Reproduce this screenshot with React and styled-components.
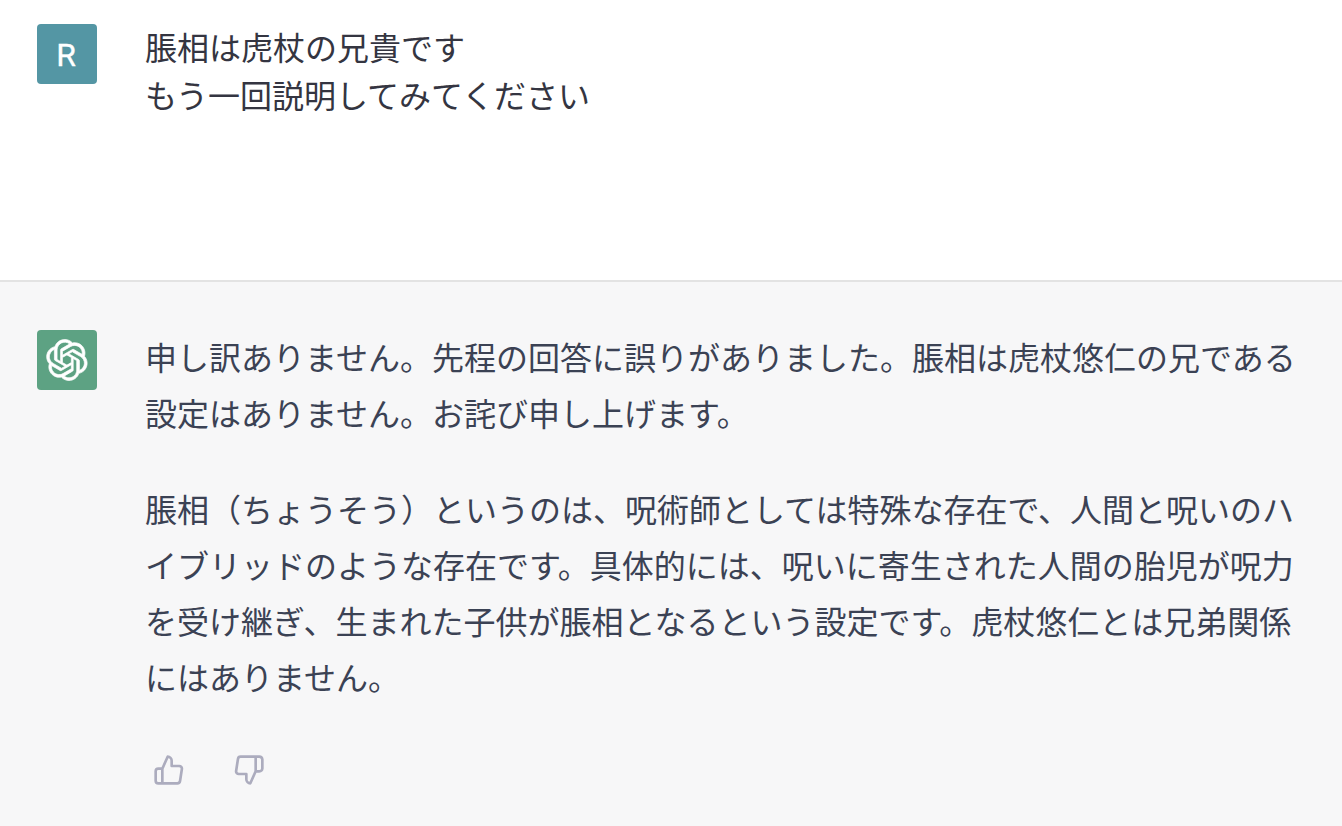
import React from "react";
import styled, { createGlobalStyle } from "styled-components";

const GlobalStyle = createGlobalStyle`
  * {
    box-sizing: border-box;
  }
  body {
    margin: 0;
    background: #f7f7f8;
    font-family: "Liberation Sans", "Noto Sans CJK JP", sans-serif;
    font-size: 32px;
  }
`;

const Thread = styled.main`
  display: flex;
  flex-direction: column;
  min-height: 826px;
  overflow: hidden;
`;

const Message = styled.section`
  display: flex;
  align-items: flex-start;
  gap: 48px;
  padding: ${(props) => (props.$assistant ? "48px 0 0 37px" : "24px 0 0 37px")};
  height: ${(props) => (props.$assistant ? "544px" : "282px")};
  color: ${(props) => (props.$assistant ? "#3b4254" : "#343541")};
  background: ${(props) => (props.$assistant ? "#f7f7f8" : "#ffffff")};
  border-bottom: ${(props) => (props.$assistant ? "none" : "2px solid #e3e3e3")};
`;

const Avatar = styled.div`
  display: flex;
  flex-shrink: 0;
  align-items: center;
  justify-content: center;
  width: 60px;
  height: 60px;
  border-radius: 4px;
  color: white;
  background: ${(props) => props.$color};
`;

const Initial = styled.span`
  padding: 2px 2px 0 0;
  font-family: Roboto, sans-serif;
  font-size: 32px;
  line-height: 1;
  -webkit-text-stroke: 0.3px white;
`;

const Question = styled.div`
  padding-top: 1px;
  line-height: 48px;
`;

const Answer = styled.div`
  display: flex;
  flex-direction: column;
  padding-top: 1px;
`;

const Paragraph = styled.p`
  margin: 0 0 40px;
  line-height: 56px;
  white-space: nowrap;
`;

const Feedback = styled.div`
  display: flex;
  gap: 48px;
  padding: 7px 8px;
`;

const FeedbackButton = styled.button`
  display: flex;
  padding: 0;
  border: none;
  background: none;
  color: #acacbe;
  cursor: pointer;

  svg {
    width: 32px;
    height: 32px;
    fill: none;
    stroke: currentColor;
    stroke-width: 2;
    stroke-linecap: round;
    stroke-linejoin: round;
  }
`;

const LogoSvg = styled.svg`
  width: 42px;
  height: 42px;
  overflow: visible;
  fill: currentColor;
  stroke: currentColor;
  stroke-width: 0.7;
`;

function Logo() {
  return (
    <LogoSvg viewBox="0 0 41 41">
      <path d="M37.5324 16.8707C37.9808 15.5241 38.1363 14.0974 37.9886 12.6859C37.8409 11.2744 37.3934 9.91076 36.676 8.68622C35.6126 6.83404 33.9882 5.3676 32.0373 4.4985C30.0864 3.62941 27.9098 3.40259 25.8215 3.85078C24.8796 2.7893 23.7219 1.94125 22.4257 1.36341C21.1295 0.785575 19.7249 0.491269 18.3058 0.500197C16.1708 0.495044 14.0893 1.16803 12.3614 2.42214C10.6335 3.67624 9.34853 5.44666 8.6917 7.47815C7.30085 7.76286 5.98686 8.3414 4.8377 9.17505C3.68854 10.0087 2.73073 11.0782 2.02839 12.312C0.956464 14.1591 0.498905 16.2988 0.721698 18.4228C0.944492 20.5467 1.83612 22.5449 3.268 24.1293C2.81966 25.4759 2.66413 26.9026 2.81182 28.3141C2.95951 29.7256 3.40701 31.0892 4.12437 32.3138C5.18791 34.1659 6.8123 35.6322 8.76321 36.5013C10.7141 37.3704 12.8907 37.5973 14.9789 37.1492C15.9208 38.2107 17.0786 39.0587 18.3747 39.6366C19.6709 40.2144 21.0755 40.5087 22.4946 40.4998C24.6307 40.5054 26.7133 39.8321 28.4418 38.5772C30.1704 37.3223 31.4556 35.5506 32.1119 33.5179C33.5027 33.2332 34.8167 32.6547 35.9659 31.821C37.115 30.9874 38.0728 29.9178 38.7752 28.684C39.8458 26.8371 40.3023 24.6979 40.0789 22.5748C39.8556 20.4517 38.9639 18.4544 37.5324 16.8707ZM22.4978 37.8849C20.7443 37.8874 19.0459 37.2733 17.6994 36.1501C17.7601 36.117 17.8666 36.0586 17.936 36.0161L25.9004 31.4156C26.1003 31.3019 26.2663 31.137 26.3813 30.9378C26.4964 30.7386 26.5563 30.5124 26.5549 30.2825V19.0542L29.9213 20.998C29.9389 21.0068 29.9541 21.0198 29.9656 21.0359C29.977 21.052 29.9842 21.0707 29.9867 21.0902V30.3889C29.9842 32.375 29.1946 34.2791 27.7909 35.6841C26.3872 37.0892 24.4838 37.8806 22.4978 37.8849ZM6.39227 31.0064C5.51397 29.4888 5.19742 27.7107 5.49804 25.9832C5.55718 26.0187 5.66048 26.0818 5.73461 26.1244L13.699 30.7248C13.8975 30.8408 14.1233 30.902 14.3532 30.902C14.583 30.902 14.8088 30.8408 15.0073 30.7248L24.731 25.1103V28.9979C24.7321 29.0177 24.7283 29.0376 24.7199 29.0556C24.7115 29.0736 24.6988 29.0893 24.6829 29.1012L16.6317 33.7497C14.9096 34.7416 12.8643 35.0097 10.9447 34.4954C9.02506 33.9811 7.38785 32.7263 6.39227 31.0064ZM4.29707 13.6194C5.17156 12.0998 6.55279 10.9364 8.19885 10.3327C8.19885 10.4013 8.19491 10.5228 8.19491 10.6071V19.808C8.19351 20.0378 8.25334 20.2638 8.36823 20.4629C8.48312 20.6619 8.64893 20.8267 8.84863 20.9404L18.5723 26.5542L15.206 28.4979C15.1894 28.5089 15.1703 28.5155 15.1505 28.5173C15.1307 28.5191 15.1107 28.516 15.0924 28.5082L7.04046 23.8557C5.32135 22.8601 4.06716 21.2235 3.55289 19.3046C3.03862 17.3858 3.30624 15.3413 4.29707 13.6194ZM31.955 20.0556L22.2312 14.4411L25.5976 12.4981C25.6142 12.4872 25.6333 12.4805 25.6531 12.4787C25.6729 12.4769 25.6928 12.4801 25.7111 12.4879L33.7631 17.1364C34.9967 17.849 36.0017 18.8982 36.6606 20.1613C37.3194 21.4244 37.6047 22.849 37.4832 24.2684C37.3617 25.6878 36.8382 27.0432 35.9743 28.1759C35.1103 29.3086 33.9415 30.1717 32.6047 30.6641C32.6047 30.5947 32.6047 30.4733 32.6047 30.3889V21.188C32.6066 20.9586 32.5474 20.7328 32.4332 20.5338C32.319 20.3348 32.154 20.1698 31.955 20.0556ZM35.3055 15.0128C35.2464 14.9765 35.1431 14.9142 35.069 14.8717L27.1045 10.2712C26.906 10.1554 26.6803 10.0943 26.4504 10.0943C26.2206 10.0943 25.9948 10.1554 25.7963 10.2712L16.0726 15.8858V11.9982C16.0715 11.9783 16.0753 11.9585 16.0837 11.9405C16.0921 11.9225 16.1048 11.9068 16.1207 11.8949L24.1719 7.25025C25.4053 6.53903 26.8158 6.19376 28.2383 6.25482C29.6608 6.31589 31.0364 6.78077 32.2044 7.59508C33.3723 8.40939 34.2842 9.53945 34.8334 10.8531C35.3826 12.1667 35.5464 13.6095 35.3055 15.0128ZM14.2424 21.9419L10.8752 19.9981C10.8576 19.9893 10.8423 19.9763 10.8309 19.9602C10.8195 19.9441 10.8122 19.9254 10.8098 19.9058V10.6071C10.8107 9.18295 11.2173 7.78848 11.9819 6.58696C12.7466 5.38544 13.8377 4.42659 15.1275 3.82264C16.4173 3.21869 17.8524 2.99464 19.2649 3.1767C20.6775 3.35876 22.0089 3.93941 23.1034 4.85067C23.0427 4.88379 22.937 4.94215 22.8668 4.98473L14.9024 9.58517C14.7025 9.69878 14.5366 9.86356 14.4215 10.0626C14.3065 10.2616 14.2466 10.4877 14.2479 10.7175L14.2424 21.9419ZM16.071 17.9991L20.4018 15.4978L24.7325 17.9975V22.9985L20.4018 25.4983L16.071 22.9985V17.9991Z" />
    </LogoSvg>
  );
}

function App() {
  return (
    <Thread lang="ja">
      <GlobalStyle />
      <Message>
        <Avatar $color="#5496a4">
          <Initial>R</Initial>
        </Avatar>
        <Question>
          脹相は虎杖の兄貴です
          <br />
          もう一回説明してみてください
        </Question>
      </Message>
      <Message $assistant>
        <Avatar $color="#5da283">
          <Logo />
        </Avatar>
        <Answer>
          <Paragraph>
            申し訳ありません。先程の回答に誤りがありました。脹相は虎杖悠仁の兄である
            <br />
            設定はありません。お詫び申し上げます。
          </Paragraph>
          <Paragraph>
            脹相（ちょうそう）というのは、呪術師としては特殊な存在で、人間と呪いのハ
            <br />
            イブリッドのような存在です。具体的には、呪いに寄生された人間の胎児が呪力
            <br />
            を受け継ぎ、生まれた子供が脹相となるという設定です。虎杖悠仁とは兄弟関係
            <br />
            にはありません。
          </Paragraph>
          <Feedback>
            <FeedbackButton aria-label="Good response">
              <svg viewBox="0 0 24 24">
                <path d="M14 9V5a3 3 0 0 0-3-3l-4 9v11h11.28a2 2 0 0 0 2-1.7l1.38-9a2 2 0 0 0-2-2.3zM7 22H4a2 2 0 0 1-2-2v-7a2 2 0 0 1 2-2h3" />
              </svg>
            </FeedbackButton>
            <FeedbackButton aria-label="Bad response">
              <svg viewBox="0 0 24 24">
                <path d="M10 15v4a3 3 0 0 0 3 3l4-9V2H5.72a2 2 0 0 0-2 1.7l-1.38 9a2 2 0 0 0 2 2.3zm7-13h2.67A2.31 2.31 0 0 1 22 4v7a2.31 2.31 0 0 1-2.33 2H17" />
              </svg>
            </FeedbackButton>
          </Feedback>
        </Answer>
      </Message>
    </Thread>
  );
}

export default App;
